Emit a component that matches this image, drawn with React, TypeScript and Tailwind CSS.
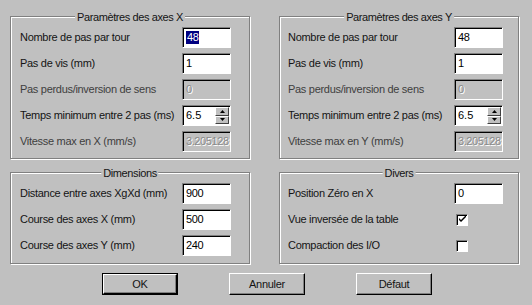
import React from 'react';

const FONT = { fontFamily: '"Liberation Sans", Arial, sans-serif' };

function GroupBox({ title, className, children }: { title: string; className?: string; children: React.ReactNode }) {
  return (
    <div className={`relative border border-[#808080] shadow-[1px_1px_0_#fff,inset_1px_1px_0_#fff] ${className ?? ''}`}>
      <span className="absolute left-1/2 top-0 -translate-x-1/2 -translate-y-1/2 bg-[#c0c0c0] px-[2px] text-[11px] leading-[13px] tracking-[-0.4px] text-[#141414] whitespace-nowrap">
        {title}
      </span>
      {children}
    </div>
  );
}

function Field({ value, disabled, selected }: { value: string; disabled?: boolean; selected?: boolean }) {
  return (
    <div
      className={`flex h-[21px] w-[49px] items-center overflow-hidden border border-t-[#808080] border-l-[#808080] border-b-white border-r-white shadow-[inset_1px_1px_0_#000] pl-[3px] text-[11px] tracking-[-0.4px] ${disabled ? 'bg-[#c0c0c0] text-[#8a8a8a] [text-shadow:1px_1px_0_#fff]' : 'bg-white text-black'}`}
    >
      {selected ? <span className="bg-[#000080] px-[1px] text-white leading-[13px]">{value}</span> : value}
    </div>
  );
}

function Spinner({ value }: { value: string }) {
  return (
    <div className="flex h-[21px] w-[49px] border border-t-[#808080] border-l-[#808080] border-b-white border-r-white shadow-[inset_1px_1px_0_#000] bg-white">
      <div className="flex flex-1 items-center pl-[3px] text-[11px] text-black">{value}</div>
      <div className="flex w-[15px] flex-col py-[1px] pr-[1px]">
        <SpinBtn up />
        <SpinBtn />
      </div>
    </div>
  );
}

function SpinBtn({ up }: { up?: boolean }) {
  return (
    <div className="flex flex-1 items-center justify-center bg-[#c0c0c0] border border-t-white border-l-white border-b-[#404040] border-r-[#404040]">
      <svg width="5" height="3" viewBox="0 0 5 3">
        {up ? <polygon points="2.5,0 5,3 0,3" fill="#000" /> : <polygon points="0,0 5,0 2.5,3" fill="#000" />}
      </svg>
    </div>
  );
}

function Check({ checked }: { checked?: boolean }) {
  return (
    <div className="flex h-[12px] w-[12px] items-center justify-center border border-t-[#808080] border-l-[#808080] border-b-white border-r-white shadow-[inset_1px_1px_0_#000] bg-white">
      {checked && (
        <svg width="7" height="7" viewBox="0 0 7 7">
          <path d="M0 2 L0 4 L2 6 L7 1 L7 -1 L2 4 Z" fill="#000" />
        </svg>
      )}
    </div>
  );
}

function Row({ label, dim, children }: { label: string; dim?: boolean; children: React.ReactNode }) {
  return (
    <div className="flex h-[21px] items-center justify-between">
      <span className={`text-[11px] tracking-[-0.3px] ${dim ? 'text-[#3e3e3e]' : 'text-[#141414]'}`}>{label}</span>
      {children}
    </div>
  );
}

function Button({ label, isDefault }: { label: string; isDefault?: boolean }) {
  return (
    <div className={`h-[22px] w-[76px] ${isDefault ? 'border border-black' : ''}`}>
      <div className="flex h-full w-full items-center justify-center border border-t-white border-l-white border-b-black border-r-black shadow-[inset_-1px_-1px_0_#808080] text-[11px] tracking-[-0.3px] text-[#141414]">
        {label}
      </div>
    </div>
  );
}

function AxisGroup({ axis, padL, padR }: { axis: string; padL: string; padR: string }) {
  return (
    <GroupBox title={`Paramètres des axes ${axis}`} className={`h-[143px] pt-[10px] ${padL} ${padR}`}>
      <div className="flex flex-col gap-[5px]">
        <Row label="Nombre de pas par tour"><Field value="48" selected={axis === 'X'} /></Row>
        <Row label="Pas de vis (mm)"><Field value="1" /></Row>
        <Row label="Pas perdus/inversion de sens" dim><Field value="0" disabled /></Row>
        <Row label="Temps minimum entre 2 pas (ms)"><Spinner value="6.5" /></Row>
        <Row label={`Vitesse max en ${axis} (mm/s)`} dim><Field value="3.205128" disabled /></Row>
      </div>
    </GroupBox>
  );
}

export default function App() {
  return (
    <div className="h-[305px] w-[532px] bg-[#c0c0c0] pl-[10px] pt-[16px]" style={FONT}>
      <div className="grid grid-cols-[240px_240px] gap-x-[29px] gap-y-[13px]">
        <AxisGroup axis="X" padL="pl-[9px]" padR="pr-[18px]" />
        <AxisGroup axis="Y" padL="pl-[8px]" padR="pr-[15px]" />
        <GroupBox title="Dimensions" className="h-[92px] pt-[10px] pl-[9px] pr-[18px]">
          <div className="flex flex-col gap-[5px]">
            <Row label="Distance entre axes XgXd (mm)"><Field value="900" /></Row>
            <Row label="Course des axes X (mm)"><Field value="500" /></Row>
            <Row label="Course des axes Y (mm)"><Field value="240" /></Row>
          </div>
        </GroupBox>
        <GroupBox title="Divers" className="h-[92px] pt-[10px] pl-[8px] pr-[15px]">
          <div className="flex flex-col gap-[5px]">
            <Row label="Position Zéro en X"><Field value="0" /></Row>
            <Row label="Vue inversée de la table">
              <div className="flex w-[49px] pl-[2px]"><Check checked /></div>
            </Row>
            <Row label="Compaction des I/O">
              <div className="flex w-[49px] pl-[2px]"><Check /></div>
            </Row>
          </div>
        </GroupBox>
      </div>
      <div className="mt-[9px] flex gap-[51px] pl-[92px]">
        <Button label="OK" isDefault />
        <Button label="Annuler" />
        <Button label="Défaut" />
      </div>
    </div>
  );
}
